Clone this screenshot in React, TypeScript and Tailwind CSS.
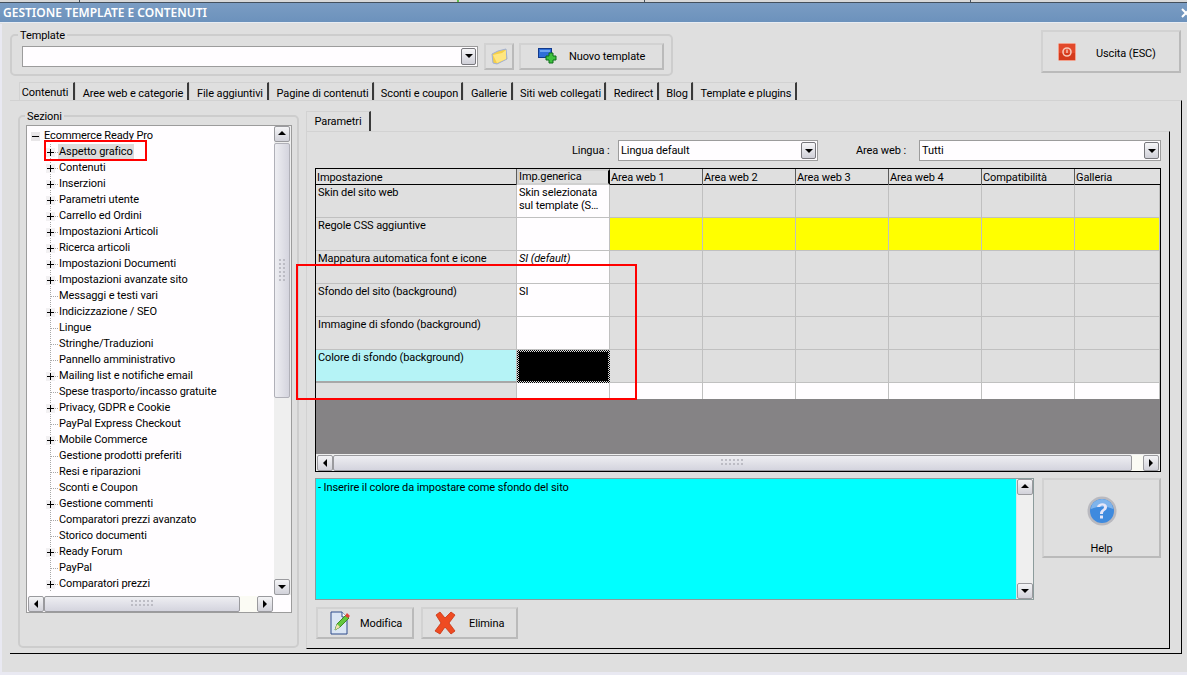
import React from "react";

const TABS = [
  { label: "Contenuti", w: "w-[56px]" },
  { label: "Aree web e categorie", w: "w-[114px]" },
  { label: "File aggiuntivi", w: "w-[80px]" },
  { label: "Pagine di contenuti", w: "w-[105px]" },
  { label: "Sconti e coupon", w: "w-[89px]" },
  { label: "Gallerie", w: "w-[50px]" },
  { label: "Siti web collegati", w: "w-[93px]" },
  { label: "Redirect", w: "w-[53px]" },
  { label: "Blog", w: "w-[34px]" },
  { label: "Template e plugins", w: "w-[104px]" },
];

const TREE: [string, boolean][] = [
  ["Aspetto grafico", true],
  ["Contenuti", true],
  ["Inserzioni", true],
  ["Parametri utente", true],
  ["Carrello ed Ordini", true],
  ["Impostazioni Articoli", true],
  ["Ricerca articoli", true],
  ["Impostazioni Documenti", true],
  ["Impostazioni avanzate sito", true],
  ["Messaggi e testi vari", false],
  ["Indicizzazione / SEO", true],
  ["Lingue", false],
  ["Stringhe/Traduzioni", false],
  ["Pannello amministrativo", false],
  ["Mailing list e notifiche email", true],
  ["Spese trasporto/incasso gratuite", false],
  ["Privacy, GDPR e Cookie", true],
  ["PayPal Express Checkout", false],
  ["Mobile Commerce", true],
  ["Gestione prodotti preferiti", false],
  ["Resi e riparazioni", false],
  ["Sconti e Coupon", false],
  ["Gestione commenti", true],
  ["Comparatori prezzi avanzato", false],
  ["Storico documenti", false],
  ["Ready Forum", true],
  ["PayPal", false],
  ["Comparatori prezzi", true],
];

const COLUMNS = ["Impostazione", "Imp.generica", "Area web 1", "Area web 2", "Area web 3", "Area web 4", "Compatibilità", "Galleria"];

const GRID = "grid grid-cols-[201px_93px_93px_93px_93px_93px_93px_85px]";

const ROWS = [
  { name: "Skin del sito web", value: "Skin selezionata\nsul template (S…" },
  { name: "Regole CSS aggiuntive", value: "", yellow: true },
  { name: "Mappatura automatica font e icone", value: "SI (default)", italic: true },
  { name: "Sfondo del sito (background)", value: "SI" },
  { name: "Immagine di sfondo (background)", value: "" },
  { name: "Colore di sfondo (background)", value: "", selected: true },
];

function Arrow({ dir }: { dir: "up" | "down" | "left" | "right" }) {
  const points = {
    up: "1,6 9,6 5,2",
    down: "1,3 9,3 5,7",
    left: "7,1 7,9 3,5",
    right: "3,1 3,9 7,5",
  }[dir];
  return (
    <svg width="10" height="10" viewBox="0 0 10 10">
      <polygon points={points} fill="#000" />
    </svg>
  );
}

function ScrollBtn({ dir }: { dir: "up" | "down" | "left" | "right" }) {
  return (
    <div className="w-[16px] h-[16px] shrink-0 flex items-center justify-center rounded-[2px] border border-[#9a9a9e] bg-gradient-to-b from-[#f4f4f6] to-[#d2d2da]">
      <Arrow dir={dir} />
    </div>
  );
}

function Grip({ vertical }: { vertical?: boolean }) {
  return (
    <svg width={vertical ? 7 : 23} height={vertical ? 23 : 7} className="opacity-80">
      {Array.from({ length: 12 }).map((_, i) => {
        const a = (i % 6) * 4;
        const b = i < 6 ? 0 : 4;
        return <rect key={i} x={vertical ? b : a} y={vertical ? a : b} width="2" height="2" fill="#b4b4bc" />;
      })}
    </svg>
  );
}

function ComboArrow() {
  return (
    <div className="w-[15px] h-[17px] flex items-center justify-center rounded-[2px] border border-[#77777c] bg-gradient-to-b from-[#f6f6f8] to-[#d0d0d8]">
      <Arrow dir="down" />
    </div>
  );
}

function Combo({ text, className }: { text?: string; className: string }) {
  return (
    <div className={`h-[21px] flex items-center justify-between bg-[#fffdff] border border-[#9c9c9c] pl-[2px] pr-[1px] ${className}`}>
      <span>{text}</span>
      <ComboArrow />
    </div>
  );
}

function FlatButton({ className, children }: { className: string; children: React.ReactNode }) {
  return (
    <div className={`flex items-center border-2 border-t-[#d2d2d2] border-l-[#d2d2d2] border-r-[#bababa] border-b-[#bababa] bg-[#dfdfdf] ${className}`}>
      {children}
    </div>
  );
}

function TreeRow({ label, expandable }: { label: string; expandable: boolean }) {
  return (
    <div className="flex h-[16px] items-center">
      <svg width="16" height="16" className="shrink-0">
        <line x1="8.5" y1="0" x2="8.5" y2="16" stroke="#a8a8a8" strokeDasharray="1 1" />
        <line x1="9" y1="8.5" x2="16" y2="8.5" stroke="#a8a8a8" strokeDasharray="1 1" />
        {expandable && (
          <>
            <rect x="4" y="4" width="9" height="9" fill="#f2f0f2" />
            <line x1="5" y1="8.5" x2="12" y2="8.5" stroke="#000" />
            <line x1="8.5" y1="5" x2="8.5" y2="12" stroke="#000" />
          </>
        )}
      </svg>
      <span className={`px-[1px] leading-[16px] whitespace-nowrap ${label === "Aspetto grafico" ? "bg-[#dcdcdc]" : ""}`}>
        {label}
      </span>
    </div>
  );
}

function FolderIcon() {
  return (
    <svg width="17" height="17" viewBox="0 0 17 17">
      <path d="M1 6 L7 3 L15 1 L16 11 L6 16 L2 15 Z" fill="#f5cf4a" stroke="#9fb0d8" />
      <path d="M2 7 L11 5 L15 2 L15 11 L6 15 Z" fill="#ffe680" />
    </svg>
  );
}

function NewTemplateIcon() {
  return (
    <svg width="20" height="18" viewBox="0 0 20 18">
      <rect x="0.5" y="1.5" width="13" height="9" fill="#2f6fd8" stroke="#123a8c" />
      <rect x="2" y="3" width="10" height="2" fill="#6ea4f0" />
      <path d="M11 6h4v3h3v4h-3v3h-4v-3H8V9h3z" fill="#3fc23f" stroke="#0e6e1a" />
    </svg>
  );
}

function PowerIcon() {
  return (
    <svg width="18" height="18" viewBox="0 0 18 18">
      <rect x="0.5" y="0.5" width="17" height="17" rx="1" fill="#e2492b" stroke="#f2a08c" />
      <rect x="1" y="10" width="16" height="7" fill="#d43a1c" />
      <circle cx="9" cy="9" r="4" fill="none" stroke="#f7c8b8" strokeWidth="1.6" />
      <line x1="9" y1="6.5" x2="9" y2="10" stroke="#f7c8b8" strokeWidth="1.4" />
    </svg>
  );
}

function HelpIcon() {
  return (
    <svg width="30" height="30" viewBox="0 0 30 30">
      <circle cx="15" cy="15" r="14.5" fill="#b9b9bf" />
      <circle cx="15" cy="15" r="12" fill="#3e8ade" />
      <path d="M4 13a11 10 0 0 1 22 0c-6-3-15-3-22 0z" fill="#7fb4ec" />
      <path d="M10 11c1-5 10-5 10 0 0 4-4 3-4 7h-3c0-5 4-4 4-7 0-2-3-2-4 0zM13 19.500h3v3h-3z" fill="#e6e6f8" />
    </svg>
  );
}

function EditIcon() {
  return (
    <svg width="20" height="24" viewBox="0 0 20 24">
      <path d="M1 1h11l5 5v17H1z" fill="#dbe6f4" stroke="#2f4d8c" />
      <path d="M12 1v5h5" fill="#fff" stroke="#2f4d8c" />
      <path d="M5 19l2-6 9-9 3 3-9 9z" fill="#63c83c" stroke="#3d8a22" />
      <path d="M15 5l2-3 3 3-2 2z" fill="#e0453a" />
      <path d="M5 19l2-6 3 3z" fill="#f3e0b0" />
    </svg>
  );
}

function DeleteIcon() {
  return (
    <svg width="22" height="24" viewBox="0 0 22 24">
      <path d="M2 4l4-3 5 6 6-6 4 3-6 8 6 8-4 3-6-7-5 7-5-3 6-8z" fill="#ef4b22" stroke="#c93412" strokeWidth="0.8" />
    </svg>
  );
}

function Cell({ className = "", children }: { className?: string; children?: React.ReactNode }) {
  return (
    <div className={`h-[33px] border-r border-b border-[#c0c0c0] pl-[2px] leading-[13px] pt-[1px] whitespace-pre-line overflow-hidden ${className}`}>
      {children}
    </div>
  );
}

export default function App() {
  return (
    <div className="relative w-[1187px] h-[675px] overflow-hidden bg-[#dfdfdf] text-black text-[11px] leading-[13px] tracking-[-0.1px] font-['Roboto',sans-serif] flex flex-col">
      {/* pezzo della finestra dietro */}
      <div className="h-[3px] shrink-0 bg-[#d8d8d8] border-b border-[#44505c] flex">
        <div className="ml-[79px] w-[1px] bg-[#44505c]" />
        <div className="ml-[377px] w-[2px] bg-[#5cc04a]" />
        <div className="ml-[185px] w-[1px] bg-[#44505c]" />
        <div className="ml-[325px] w-[1px] bg-[#44505c]" />
      </div>

      <div className="h-[20px] shrink-0 flex items-center justify-between pl-[3px] bg-gradient-to-b from-[#7a9cc3] to-[#6c92bc] border-b border-[#e8ecf2] text-white text-[12px] tracking-normal font-semibold font-['Noto_Sans',sans-serif]">
        <span>GESTIONE TEMPLATE E CONTENUTI</span>
        <svg width="6" height="10" viewBox="0 0 6 10">
          <path d="M1 1l8 8M9 1l-8 8" stroke="#fff" strokeWidth="2" fill="none" />
        </svg>
      </div>

      {/* Template + uscita */}
      <div className="flex justify-between pl-[10px] pr-[6px] pt-[7px] h-[56px] shrink-0">
        <div className="relative mt-[4px] w-[663px] h-[42px] border-2 border-[#cdcdcd] rounded-[5px] flex items-center pl-[10px] pt-[2px]">
          <span className="absolute left-[6px] top-[-7px] px-[2px] bg-[#dfdfdf]">Template</span>
          <Combo className="w-[456px]" />
          <FlatButton className="w-[30px] h-[27px] ml-[6px] justify-center">
            <FolderIcon />
          </FlatButton>
          <FlatButton className="w-[145px] h-[27px] ml-[5px] pl-[17px]">
            <NewTemplateIcon />
            <span className="ml-[11px] pt-[1px]">Nuovo template</span>
          </FlatButton>
        </div>
        <FlatButton className="w-[140px] h-[43px] pl-[15px]">
          <PowerIcon />
          <span className="ml-[20px] pt-[3px]">Uscita (ESC)</span>
        </FlatButton>
      </div>

      {/* Tab principali */}
      <div className="flex h-[18px] shrink-0 pl-[19px] mt-[3px]">
        {TABS.map((t, i) => (
          <div key={t.label} className={`${t.w} h-[18px] shrink-0 flex items-center justify-center border-t border-l border-[#d2d2d2] border-r-2 border-r-[#3a3a3a] whitespace-nowrap ${i === 0 ? "pt-[2px] pr-[3px]" : "pt-[4px] pl-[3px]"}`}>
            {t.label}
          </div>
        ))}
      </div>

      {/* Contenitore tab */}
      <div className="ml-[10px] w-[1172px] h-[554px] shrink-0 border-t border-t-[#d2d2d2] border-r border-r-black border-b border-b-black flex pl-[8px]">
        {/* Sezioni */}
        <div className="relative mt-[14px] w-[281px] h-[533px] border-2 border-[#cdcdcd] rounded-[5px] pl-[6px] pt-[8px]">
          <span className="absolute left-[5px] top-[-7px] px-[2px] bg-[#dfdfdf]">Sezioni</span>
          <div className="w-[266px] h-[488px] border border-[#9c9c9c] bg-[#fffdff] flex flex-col overflow-hidden">
            <div className="flex h-[469px]">
              <div className="w-[247px] overflow-hidden pt-[1px]">
                <div className="flex h-[17px] items-center pl-[4px]">
                  <svg width="13" height="16" className="shrink-0">
                    <rect x="0" y="4" width="9" height="9" fill="#e8e6e8" />
                    <line x1="1" y1="8.5" x2="8" y2="8.5" stroke="#000" />
                  </svg>
                  <span className="whitespace-nowrap">Ecommerce Ready Pro</span>
                </div>
                <div className="pl-[15px]">
                  {TREE.map(([label, exp]) => (
                    <TreeRow key={label} label={label} expandable={exp} />
                  ))}
                </div>
              </div>
              <div className="w-[17px] ml-[1px] flex flex-col bg-[#efefef]">
                <ScrollBtn dir="up" />
                <div className="h-[255px] mt-[1px] w-[16px] flex items-center justify-center rounded-[2px] border border-[#b0b0b8] bg-gradient-to-r from-[#eeeef2] to-[#d4d4de]">
                  <Grip vertical />
                </div>
                <div className="flex-1" />
                <ScrollBtn dir="down" />
              </div>
            </div>
            <div className="flex h-[17px] pl-[1px] items-center w-[247px]">
              <ScrollBtn dir="left" />
              <div className="w-[196px] h-[16px] flex items-center justify-center rounded-[2px] border border-[#9a9a9e] bg-gradient-to-b from-[#eeeef2] to-[#d4d4de]">
                <Grip />
              </div>
              <div className="w-[17px] h-[16px] bg-[#fbfbf4]" />
              <ScrollBtn dir="right" />
            </div>
          </div>
        </div>

        {/* Parametri */}
        <div className="ml-[7px] w-[864px] flex flex-col pt-[10px]">
          <div className="w-[65px] h-[20px] shrink-0 flex items-center justify-center border-t border-l border-[#d2d2d2] border-r-2 border-r-[#3a3a3a]">
            Parametri
          </div>
          <div className="w-[864px] h-[518px] shrink-0 border-t border-t-[#d2d2d2] border-l border-l-[#d2d2d2] border-r border-r-black border-b border-b-black pl-[8px] pt-[8px]">
            <div className="flex items-center h-[21px]">
              <span className="ml-[257px] w-[46px] whitespace-nowrap">Lingua :</span>
              <Combo text="Lingua default" className="w-[200px]" />
              <span className="ml-[38px] w-[63px] whitespace-nowrap">Area web :</span>
              <Combo text="Tutti" className="w-[242px]" />
            </div>

            {/* Griglia */}
            <div className="mt-[7px] w-[846px] h-[304px] border border-black flex flex-col">
              <div className={`${GRID} h-[16px] border-b border-black shrink-0`}>
                {COLUMNS.map((c, i) =>
                  i === 1 ? (
                    <div key={c} className="border-2 border-[#d0d0d0] border-r-black leading-[12px] whitespace-nowrap">
                      {c}
                    </div>
                  ) : (
                    <div key={c} className={`pl-[1px] pt-[1px] leading-[15px] border-r border-[#5c5c5c] ${i === 7 ? "border-r-0" : ""}`}>
                      {c}
                    </div>
                  )
                )}
              </div>
              {ROWS.map((r) => (
                <div key={r.name} className={GRID}>
                  <Cell className={r.selected ? "bg-[#b5f3f6] border-b-2 border-b-[#a8a8a8]" : ""}>{r.name}</Cell>
                  {r.selected ? (
                    <div className="h-[33px] p-[2px] bg-[repeating-conic-gradient(#000_0_25%,#dcdcdc_0_50%)] bg-[length:2px_2px]">
                      <div className="h-full bg-black" />
                    </div>
                  ) : (
                    <Cell className={`bg-[#fffdff] ${r.italic ? "italic" : ""}`}>{r.value}</Cell>
                  )}
                  {[0, 1, 2, 3, 4, 5].map((i) => (
                    <Cell key={i} className={r.yellow ? "bg-[#ffff00]" : ""} />
                  ))}
                </div>
              ))}
              <div className={`${GRID} h-[16px] shrink-0`}>
                <div className="bg-[#dfdfdf] border-r border-[#c0c0c0]" />
                {[0, 1, 2, 3, 4, 5, 6].map((i) => (
                  <div key={i} className="bg-[#fffdff] border-r border-[#c0c0c0]" />
                ))}
              </div>
              <div className="flex-1 bg-[#858385]" />
              <div className="h-[17px] shrink-0 flex items-center pl-[1px] bg-[#efefef]">
                <ScrollBtn dir="left" />
                <div className="w-[799px] h-[16px] flex items-center justify-center border border-[#9a9a9e] rounded-[2px] bg-gradient-to-b from-[#eeeef2] to-[#d4d4de]">
                  <Grip />
                </div>
                <div className="w-[11px] h-[16px] bg-[#fbfbf4]" />
                <ScrollBtn dir="right" />
              </div>
            </div>

            {/* Descrizione + help */}
            <div className="flex mt-[6px]">
              <div className="w-[719px] h-[122px] border border-[#8c9c9c] bg-[#00ffff] flex justify-between">
                <span className="pl-[2px] pt-[2px]">- Inserire il colore da impostare come sfondo del sito</span>
                <div className="w-[17px] flex flex-col justify-between bg-[#efefef] border-l border-[#d8e8e8]">
                  <ScrollBtn dir="up" />
                  <ScrollBtn dir="down" />
                </div>
              </div>
              <FlatButton className="w-[119px] h-[80px] ml-[8px] flex-col pt-[16px]">
                <HelpIcon />
                <span className="mt-[16px]">Help</span>
              </FlatButton>
            </div>

            <div className="flex mt-[7px] ml-[1px]">
              <FlatButton className="w-[98px] h-[32px] pl-[12px]">
                <EditIcon />
                <span className="ml-[10px] pt-[1px]">Modifica</span>
              </FlatButton>
              <FlatButton className="w-[97px] h-[32px] ml-[7px] pl-[11px]">
                <DeleteIcon />
                <span className="ml-[13px] pt-[1px]">Elimina</span>
              </FlatButton>
            </div>
          </div>
        </div>
      </div>

      <div className="mt-auto h-[3px] shrink-0 bg-[#e9e9f2]" />

      {/* bordo sinistro finestra e riquadri rossi di annotazione */}
      <div className="absolute left-0 top-[24px] bottom-0 w-[2px] bg-[#e9e9f2]" />
      <div className="absolute left-[44px] top-[140px] w-[103px] h-[21px] border-2 border-[#ff0000]" />
      <div className="absolute left-[296px] top-[264px] w-[341px] h-[136px] border-2 border-[#ff0000]" />
    </div>
  );
}
